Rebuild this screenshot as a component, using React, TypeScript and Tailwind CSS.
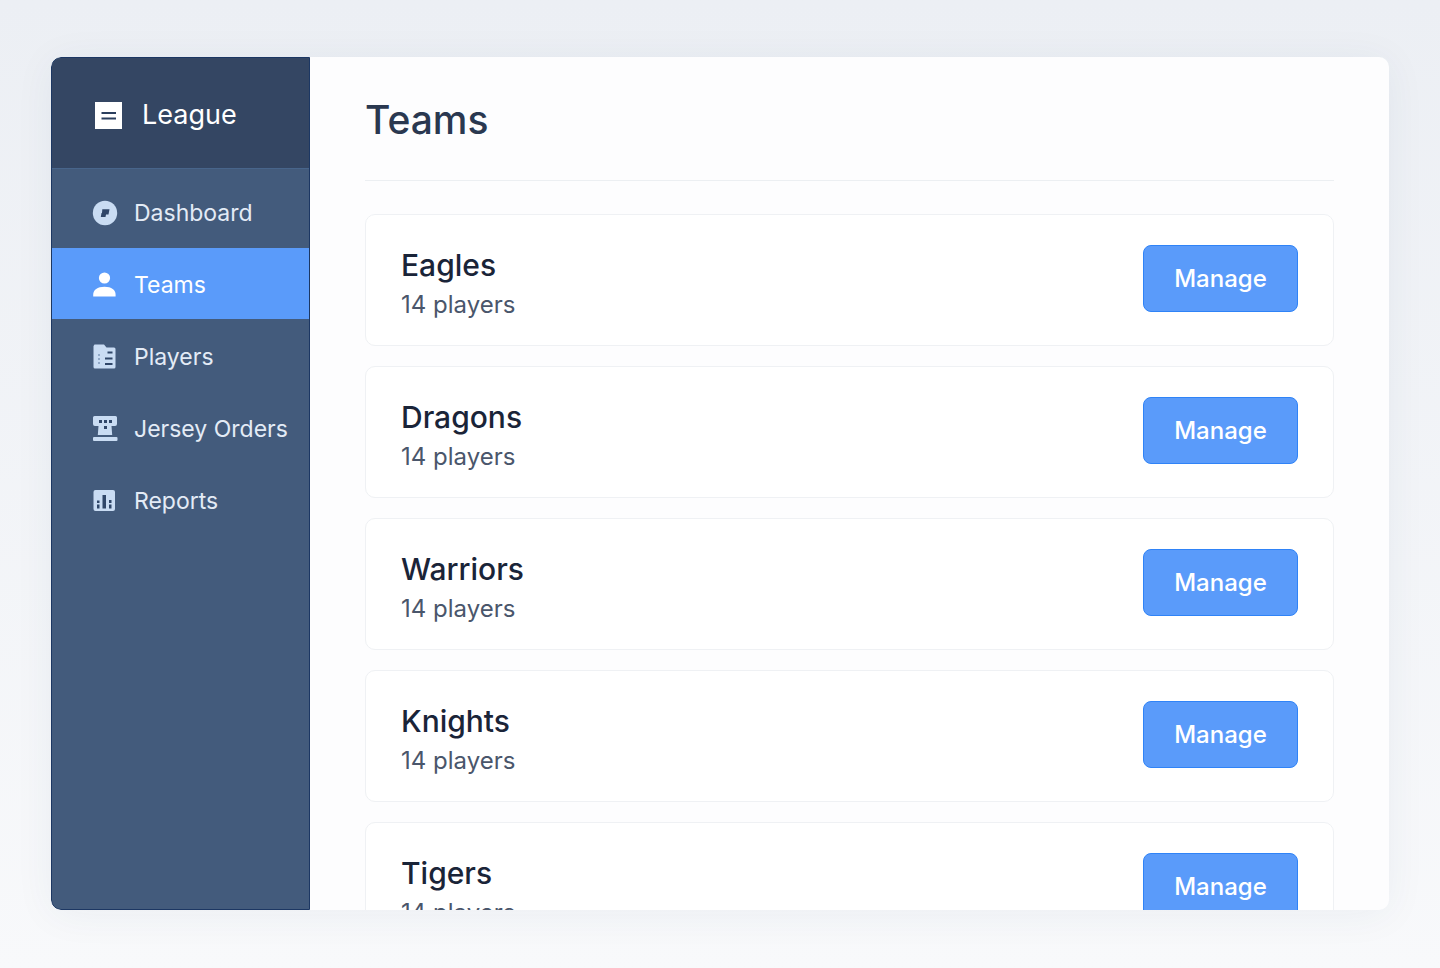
import type { ReactNode } from "react";

type IconProps = { className?: string };

function LeagueIcon() {
  return (
    <svg width="27" height="27" viewBox="0 0 27 27" aria-hidden="true">
      <rect width="27" height="27" fill="#fff" />
      <path d="M6.5 11H21M6.5 16.5H21" stroke="#2b3f5e" strokeWidth="2" />
    </svg>
  );
}

function DashboardIcon({ className }: IconProps) {
  return (
    <svg width="26" height="26" viewBox="0 0 26 26" className={className} aria-hidden="true">
      <circle cx="13" cy="13" r="12.2" fill="currentColor" />
      <path d="M10.3 9.2H17.5L16.5 14.5H14L13.5 17H8.8L9.5 13H10z" fill="#2f4669" />
    </svg>
  );
}

function TeamsIcon({ className }: IconProps) {
  return (
    <svg width="26" height="26" viewBox="0 0 26 26" className={className} aria-hidden="true">
      <circle cx="12.5" cy="6" r="5.6" fill="currentColor" />
      <path d="M1.2 24.5v-1.700c0-5 4.200-8 11.300-8s11.100 3 11.100 8v1.700z" fill="currentColor" />
    </svg>
  );
}

function PlayersIcon({ className }: IconProps) {
  return (
    <svg width="26" height="26" viewBox="0 0 26 26" className={className} aria-hidden="true">
      <path
        d="M2.500 0.500H12L14.500 3.500H22A1.500 1.500 0 0 1 23.500 5V23A1.500 1.500 0 0 1 22 24.500H3A1.500 1.500 0 0 1 1.500 23V2z"
        fill="currentColor"
      />
      <path d="M15.5 8.500H20.500M13 14.500H20.500M13 20H20.500" stroke="#2f4669" strokeWidth="2" />
      <path d="M7 10V22" stroke="#7f98ba" strokeWidth="1.500" strokeDasharray="2 2" />
    </svg>
  );
}

function JerseyIcon({ className }: IconProps) {
  return (
    <svg width="26" height="26" viewBox="0 0 26 26" className={className} aria-hidden="true">
      <path
        d="M2.500 0H23.500A1.500 1.500 0 0 1 25 1.500V8A2 2 0 0 1 23 10H19.500L20.200 19H5.800L6.500 10H3A2 2 0 0 1 1 8V1.500A1.500 1.500 0 0 1 2.500 0z"
        fill="currentColor"
      />
      <rect x="1" y="21" width="24.500" height="4" rx="1" fill="currentColor" />
      <path d="M7 4h3v3H7zM12 4h3v3h-3zM17 4h3v3h-3zM12 10h3v3h-3z" fill="#2f4669" />
    </svg>
  );
}

function ReportsIcon({ className }: IconProps) {
  return (
    <svg width="26" height="26" viewBox="0 0 26 26" className={className} aria-hidden="true">
      <rect x="1.500" y="2" width="21.500" height="21" rx="2" fill="currentColor" />
      <path
        d="M5 12.500h2.500V15H5zM5 16.500h2.500V20.500H5zM10.500 7h3.500v13.500h-3.500zM17 12h2.500V15H17zM17 16.500h2.500V20.500H17z"
        fill="#2f4669"
      />
    </svg>
  );
}

const NAV = [
  { label: "Dashboard",     icon: DashboardIcon },
  { label: "Teams",         icon: TeamsIcon, active: true },
  { label: "Players",       icon: PlayersIcon },
  { label: "Jersey Orders", icon: JerseyIcon },
  { label: "Reports",       icon: ReportsIcon },
];

const TEAMS = [
  { name: "Eagles",   players: 14 },
  { name: "Dragons",  players: 14 },
  { name: "Warriors", players: 14 },
  { name: "Knights",  players: 14 },
  { name: "Tigers",   players: 14 },
];

function Sidebar() {
  return (
    <aside className="flex w-[259px] shrink-0 flex-col overflow-hidden rounded-l-[10px] border border-[#1c3763] bg-[#435b7c]">
      {/* Logo */}
      <div className="flex h-[110px] shrink-0 items-center gap-5 bg-[#344663] pl-[43px] pt-1 text-white">
        <LeagueIcon />
        <span className="text-[27px] leading-9">League</span>
      </div>

      {/* Nav */}
      <nav className="flex flex-col gap-px border-t border-[#48658b] pt-[7px]">
        {NAV.map(({ label, icon: Icon, active }) => (
          <a
            key={label}
            href="#"
            aria-current={active ? "page" : undefined}
            className={`flex h-[71px] items-center gap-4 whitespace-nowrap pl-10 pt-0.5 text-[23px] leading-8 ${
              active ? "bg-[#5a9bfa] text-white" : "text-[#e3ebf6]"
            }`}
          >
            <Icon className={`shrink-0 ${active ? "text-white" : "text-[#c9dcf3]"}`} />
            {label}
          </a>
        ))}
      </nav>
    </aside>
  );
}

function TeamCard({ name, children }: { name: string; children: ReactNode }) {
  return (
    <li className="flex h-[132px] shrink-0 items-start justify-between rounded-[10px] border border-[#eff1f4] bg-white px-[35px] pt-[30px]">
      <div>
        <h2 className="text-[30px] font-medium leading-10 text-[#1a2438]">{name}</h2>
        <p className="text-[24px] leading-10 text-[#4a566b]">{children}</p>
      </div>
      <button
        type="button"
        aria-label={`Manage ${name}`}
        className="h-[67px] w-[155px] rounded-lg border border-[#2f83f7] bg-[#5a9bfa] text-[24px] font-medium text-white"
      >
        Manage
      </button>
    </li>
  );
}

export default function App() {
  return (
    <div className="h-screen bg-linear-to-b from-[#eceff4] to-[#f8f9fb] px-[51px] pb-[58px] pt-[57px] font-['Inter',sans-serif]">
      <div className="flex h-full overflow-hidden rounded-[10px] bg-[#fdfdfe] shadow-[0_4px_40px_rgba(40,60,100,0.06)]">
        <Sidebar />
        <main className="flex min-w-0 flex-1 flex-col overflow-hidden px-[55px]">
          <h1 className="flex h-[124px] shrink-0 items-center border-b border-[#eceff2] pt-1 text-[39px] font-medium text-[#2a3850]">
            Teams
          </h1>
          <ul className="mt-[33px] flex flex-col gap-5">
            {TEAMS.map(({ name, players }) => (
              <TeamCard key={name} name={name}>
                {players} players
              </TeamCard>
            ))}
          </ul>
        </main>
      </div>
    </div>
  );
}
